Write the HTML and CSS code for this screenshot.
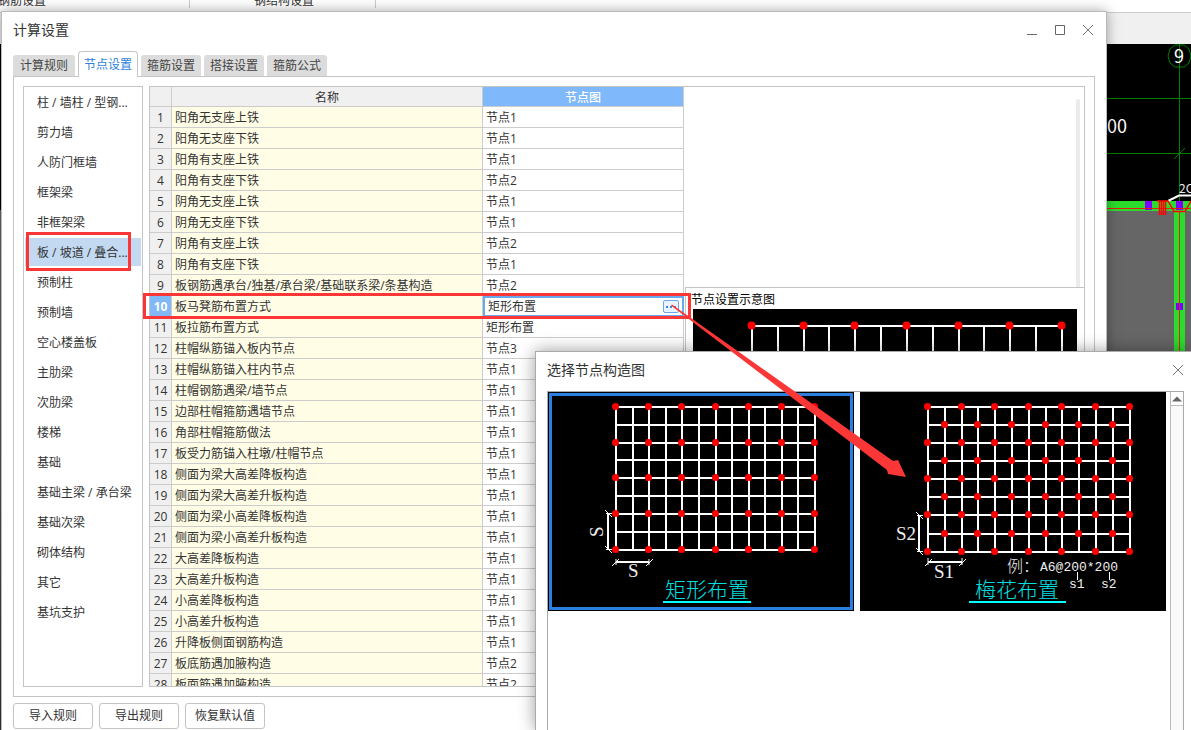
FILE: index.html
```html
<!DOCTYPE html>
<html lang="zh-CN">
<head>
<meta charset="utf-8">
<title>计算设置</title>
<link rel="stylesheet" href="styles.css">
</head>
<body>
<div class="desktop">
  <header class="ribbon">
    <span class="ribbon-group first">钢筋设置</span>
    <span class="ribbon-group second">钢结构设置</span>
  </header>
  <div class="subbar"></div>
  <div class="canvas">
    <div class="canvas-edge"></div>
    <svg class="cad" width="84" height="686" viewBox="1107 44 84 686">
      <rect x="1107" y="44" width="84" height="686" fill="#000"/>
      <rect x="1107" y="211" width="84" height="519" fill="#666"/>
      <path d="M1107 98.500h84M1107 153.500h84M1174 159l11-11" stroke="#008000" fill="none"/>
      <path d="M1107 201h84v10h-6v519h-11v-519h-67z" fill="#2cdc2c"/>
      <path d="M1179.500 44v157" stroke="#008000"/>
      <path d="M1175 45h9l5 4 2 7-2 7-5 4h-9l-5-4-2-7 2-7z" stroke="#008000" fill="none"/>
      <path d="M1145 201h7v9h-7zM1176 201h7v9h-7zM1176 303h7v7h-7z" fill="#8000ff"/>
      <path d="M1107 208.500h84M1179.500 211v519" stroke="#e02010" fill="none"/>
      <path d="M1168 201l11-5.500h12" stroke="#fff" stroke-width="2" fill="none"/>
      <path d="M1157 201h11l6 10.500h11l6-10.500M1159.500 201v14M1161.500 201v14M1163.500 201v14M1165.500 201v14" stroke="#f00" fill="none" stroke-width="1.500"/>
      <text x="1174" y="63" class="cad-text">9</text>
      <text x="1107" y="133" class="cad-text">00</text>
      <text x="1179" y="193" class="cad-small">2C</text>
    </svg>
  </div>

  <section class="dialog">
    <div class="titlebar">
      <h1 class="title">计算设置</h1>
      <div class="window-buttons">
        <button class="icon-button" aria-label="最小化"><svg width="12" height="12"><path d="M1 10.500h10" stroke="#666"/></svg></button>
        <button class="icon-button" aria-label="最大化"><svg width="12" height="12"><path d="M1.500 1.500h9v9h-9z" stroke="#666" fill="none"/></svg></button>
        <button class="icon-button" aria-label="关闭"><svg width="12" height="12"><path d="M1 1l10 10M11 1l-10 10" stroke="#777" fill="none"/></svg></button>
      </div>
    </div>
    <nav class="tabs">
      <button class="tab first">计算规则</button>
      <button class="tab active">节点设置</button>
      <button class="tab">箍筋设置</button>
      <button class="tab">搭接设置</button>
      <button class="tab">箍筋公式</button>
    </nav>
    <div class="tab-page">
      <ul class="categories">
        <li class="category">柱 / 墙柱 / 型钢...</li>
        <li class="category">剪力墙</li>
        <li class="category">人防门框墙</li>
        <li class="category">框架梁</li>
        <li class="category">非框架梁</li>
        <li class="category selected">板 / 坡道 / 叠合...</li>
        <li class="category">预制柱</li>
        <li class="category">预制墙</li>
        <li class="category">空心楼盖板</li>
        <li class="category">主肋梁</li>
        <li class="category">次肋梁</li>
        <li class="category">楼梯</li>
        <li class="category">基础</li>
        <li class="category">基础主梁 / 承台梁</li>
        <li class="category">基础次梁</li>
        <li class="category">砌体结构</li>
        <li class="category">其它</li>
        <li class="category">基坑支护</li>
      </ul>
      <div class="main-panel">
        <table class="nodes">
          <thead>
            <tr><th class="col-num"></th><th class="col-name">名称</th><th class="col-node">节点图</th></tr>
          </thead>
          <tbody>
            <tr><th>1</th><td>阳角无支座上铁</td><td>节点1</td></tr>
            <tr><th>2</th><td>阳角无支座下铁</td><td>节点1</td></tr>
            <tr><th>3</th><td>阳角有支座上铁</td><td>节点1</td></tr>
            <tr><th>4</th><td>阳角有支座下铁</td><td>节点2</td></tr>
            <tr><th>5</th><td>阴角无支座上铁</td><td>节点1</td></tr>
            <tr><th>6</th><td>阴角无支座下铁</td><td>节点1</td></tr>
            <tr><th>7</th><td>阴角有支座上铁</td><td>节点2</td></tr>
            <tr><th>8</th><td>阴角有支座下铁</td><td>节点1</td></tr>
            <tr><th>9</th><td>板钢筋遇承台/独基/承台梁/基础联系梁/条基构造</td><td>节点2</td></tr>
            <tr class="current"><th>10</th><td>板马凳筋布置方式</td><td><div class="editor"><input class="editor-input" aria-label="节点图" value="矩形布置"><button class="more" aria-label="选择"><svg width="10" height="2"><path d="M0 0h2v2h-2zM4 0h2v2h-2zM8 0h2v2h-2z" fill="#3c8ae8"/></svg></button></div></td></tr>
            <tr><th>11</th><td>板拉筋布置方式</td><td>矩形布置</td></tr>
            <tr><th>12</th><td>柱帽纵筋锚入板内节点</td><td>节点3</td></tr>
            <tr><th>13</th><td>柱帽纵筋锚入柱内节点</td><td>节点1</td></tr>
            <tr><th>14</th><td>柱帽钢筋遇梁/墙节点</td><td>节点1</td></tr>
            <tr><th>15</th><td>边部柱帽箍筋遇墙节点</td><td>节点1</td></tr>
            <tr><th>16</th><td>角部柱帽箍筋做法</td><td>节点1</td></tr>
            <tr><th>17</th><td>板受力筋锚入柱墩/柱帽节点</td><td>节点1</td></tr>
            <tr><th>18</th><td>侧面为梁大高差降板构造</td><td>节点1</td></tr>
            <tr><th>19</th><td>侧面为梁大高差升板构造</td><td>节点1</td></tr>
            <tr><th>20</th><td>侧面为梁小高差降板构造</td><td>节点1</td></tr>
            <tr><th>21</th><td>侧面为梁小高差升板构造</td><td>节点1</td></tr>
            <tr><th>22</th><td>大高差降板构造</td><td>节点1</td></tr>
            <tr><th>23</th><td>大高差升板构造</td><td>节点1</td></tr>
            <tr><th>24</th><td>小高差降板构造</td><td>节点1</td></tr>
            <tr><th>25</th><td>小高差升板构造</td><td>节点1</td></tr>
            <tr><th>26</th><td>升降板侧面钢筋构造</td><td>节点1</td></tr>
            <tr><th>27</th><td>板底筋遇加腋构造</td><td>节点2</td></tr>
            <tr><th>28</th><td>板面筋遇加腋构造</td><td>节点2</td></tr>
          </tbody>
        </table>
        <div class="side">
          <div class="side-top"><div class="thumb"></div></div>
          <div class="side-bottom">
            <h2 class="side-title">节点设置示意图</h2>
            <svg class="preview" height="270" viewBox="693 309 384 270" preserveAspectRatio="xMinYMin slice">
              <rect x="693" y="309" width="384" height="270" fill="#000"/>
              <path d="M751 326h312M752 326v253M778 326v253M804 326v253M829 326v253M855 326v253M881 326v253M907 326v253M933 326v253M959 326v253M984 326v253M1010 326v253M1036 326v253M1062 326v253" stroke="#fff" stroke-width="2" fill="none"/>
              <path class="dots large" d="M751.500 325.500h0M803.500 325.500h0M854.500 325.500h0M906.500 325.500h0M958.500 325.500h0M1009.500 325.500h0M1061.500 325.500h0"/>
            </svg>
          </div>
        </div>
      </div>
    </div>
    <footer class="actions">
      <button class="action">导入规则</button>
      <button class="action">导出规则</button>
      <button class="action">恢复默认值</button>
    </footer>
  </section>

  <section class="popup">
    <div class="popup-bar">
      <h2 class="title">选择节点构造图</h2>
      <button class="icon-button" aria-label="关闭"><svg width="12" height="12"><path d="M1 1l10 10M11 1l-10 10" stroke="#777" fill="none"/></svg></button>
    </div>
    <div class="popup-body">
      <div class="choices">
        <button class="choice selected" aria-label="矩形布置">
          <svg width="306" height="219" viewBox="548 392 306 219">
            <rect x="548" y="392" width="306" height="219" fill="#000"/>
            <rect x="550.500" y="394.500" width="301" height="214" fill="none" stroke="#2a7fe0" stroke-width="3"/>
            <path d="M615 407h201M615 425h201M615 443h201M615 460h201M615 478h201M615 496h201M615 514h201M615 532h201M615 550h201M616 407v143M633 407v143M649 407v143M666 407v143M682 407v143M699 407v143M716 407v143M732 407v143M749 407v143M765 407v143M782 407v143M798 407v143M815 407v143" stroke="#fff" stroke-width="2" fill="none"/>
            <path class="dots" d="M615.500 406.500h0m33 0h0m33 0h0m34 0h0m33 0h0m33 0h0m33 0h0M615.500 442.500h0m33 0h0m33 0h0m34 0h0m33 0h0m33 0h0m33 0h0M615.500 477.500h0m33 0h0m33 0h0m34 0h0m33 0h0m33 0h0m33 0h0M615.500 513.500h0m33 0h0m33 0h0m34 0h0m33 0h0m33 0h0m33 0h0M615.500 549.500h0m33 0h0m33 0h0m34 0h0m33 0h0m33 0h0m33 0h0"/>
            <path d="M608 513v37M616 562h33" stroke="#fff" stroke-width="2" fill="none"/>
            <path d="M605 510l7 7M605 546l7 7M606 513.500h6M606 549.500h6M612 566l7-7M646 566l7-7M616 559v6M649 559v6" stroke="#fff" fill="none"/>
            <text class="dim" x="628" y="577">S</text>
            <text class="dim" x="0" y="0" transform="translate(603 537) rotate(-90)">S</text>
            <text class="caption" x="665" y="597">矩形布置</text>
            <path d="M663 602h88" stroke="#0ff" stroke-width="2"/>
          </svg>
        </button>
        <button class="choice" aria-label="梅花布置">
          <svg width="306" height="219" viewBox="860 392 306 219">
            <rect x="860" y="392" width="306" height="219" fill="#000"/>
            <path d="M927 407h204M927 425h204M927 443h204M927 461h204M927 479h204M927 497h204M927 515h204M927 534h204M927 552h204M928 407v145M945 407v145M962 407v145M978 407v145M995 407v145M1012 407v145M1029 407v145M1046 407v145M1062 407v145M1079 407v145M1096 407v145M1113 407v145M1130 407v145" stroke="#fff" stroke-width="2" fill="none"/>
            <path class="dots" d="M927.500 406.500h0m34 0h0m33 0h0m34 0h0m33 0h0m34 0h0m34 0h0M927.500 442.500h0m34 0h0m33 0h0m34 0h0m33 0h0m34 0h0m34 0h0M927.500 478.500h0m34 0h0m33 0h0m34 0h0m33 0h0m34 0h0m34 0h0M927.500 514.500h0m34 0h0m33 0h0m34 0h0m33 0h0m34 0h0m34 0h0M927.500 551.500h0m34 0h0m33 0h0m34 0h0m33 0h0m34 0h0m34 0h0M944.500 424.500h0m33 0h0m34 0h0m34 0h0m33 0h0m34 0h0M944.500 460.500h0m33 0h0m34 0h0m34 0h0m33 0h0m34 0h0M944.500 496.500h0m33 0h0m34 0h0m34 0h0m33 0h0m34 0h0M944.500 533.500h0m33 0h0m34 0h0m34 0h0m33 0h0m34 0h0"/>
            <path d="M919 515v37M928 562h34" stroke="#fff" stroke-width="2" fill="none"/>
            <path d="M916 512l7 7M916 548l7 7M917 515.500h6M917 551.500h6M925 566l7-7M959 566l7-7M928 558v7M962 558v7M1077.500 572v8M1109.500 572v8" stroke="#fff" fill="none"/>
            <text class="dim" x="896" y="540">S2</text>
            <text class="dim" x="934" y="578">S1</text>
            <text class="note" x="1007" y="572">例：</text>
            <text class="note mono" x="1040" y="571">A6@200*200</text>
            <text class="note mono" x="1069" y="588">s1</text>
            <text class="note mono" x="1101" y="588">s2</text>
            <text class="caption" x="975" y="597">梅花布置</text>
            <path d="M969 602h97" stroke="#0ff" stroke-width="2"/>
          </svg>
        </button>
      </div>
      <div class="scrollbar">
        <button class="scroll-up" aria-label="向上滚动"><svg width="10" height="6"><path d="M0 5.500l5-5 5 5z" fill="#666"/></svg></button>
      </div>
    </div>
  </section>

  <svg class="marks" width="1191" height="730" viewBox="0 0 1191 730">
    <path d="M27.500 233.500h102v36h-102zM144.500 294.500h545v23h-545z" fill="none" stroke="#fb3636" stroke-width="3"/>
    <path d="M672 304.500L893 461l5-1 8 17-18-3-1-4-216-164.500z" fill="#fb3636"/>
  </svg>
</div>
</body>
</html>
```
FILE: styles.css
```css
* { box-sizing: border-box; }

body {
  margin: 0;
  font-family: "Open Sans", "Noto Sans CJK SC", sans-serif;
  font-size: 12px;
  line-height: 20px;
  color: #333;
}

button, input { font: inherit; color: inherit; margin: 0; }
h1, h2 { margin: 0; font-weight: 400; }

.desktop {
  position: relative;
  display: flex;
  flex-direction: column;
  height: 100vh;
  overflow: hidden;
  background: #fff;
}

.ribbon {
  display: flex;
  height: 13px;
  border-bottom: 1px solid #ccc;
  overflow: hidden;
}
.ribbon-group {
  height: 8px;
  line-height: 2px;
  border-right: 1px solid #ccc;
}
.ribbon-group.first { width: 190px; text-indent: -2px; }
.ribbon-group.second { width: 186px; padding-left: 64px; }

.subbar { height: 31px; background: #f0f0f0; }

.canvas {
  flex: 1;
  min-height: 0;
  display: flex;
  justify-content: space-between;
  background: #000;
}
.canvas-edge {
  width: 2px;
  background: linear-gradient(#000 166px, #666 166px, #555 440px, #333);
}
.cad { flex: none; }
.cad-text { font-size: 18px; fill: #fff; font-family: "Noto Sans CJK SC", sans-serif; font-weight: 400; }
.cad-small { font-size: 12px; fill: #eee; font-family: "Noto Sans CJK SC", sans-serif; }

.dialog {
  position: absolute;
  left: 1px;
  right: 84px;
  top: 11px;
  bottom: 0;
  display: flex;
  flex-direction: column;
  padding: 0 11px 1px;
  background: #fff;
  border: 1px solid #bbb;
  border-bottom: 0;
  box-shadow: 0 0 12px rgba(0, 0, 0, 0.35);
}

.titlebar {
  display: flex;
  align-items: center;
  justify-content: space-between;
  height: 39px;
  padding: 0 1px 3px 0;
}
.title { font-size: 14px; }
.window-buttons { display: flex; gap: 16px; }
.icon-button {
  display: flex;
  padding: 0;
  border: 0;
  background: none;
}

.tabs {
  display: flex;
  align-items: flex-end;
  gap: 3px;
  height: 25px;
}
.tab {
  width: 60px;
  height: 21px;
  padding: 0;
  border: 0;
  border-radius: 3px 3px 0 0;
  background: #dcdcdc;
  color: #444;
}
.tab.first { width: 62px; }
.tab.active {
  position: relative;
  height: 26px;
  margin-bottom: -1px;
  border: 1px solid #c4c4c8;
  border-bottom: 0;
  border-radius: 4px 4px 0 0;
  background: #fff;
  color: #2a7fe0;
}

.tab-page {
  flex: 1;
  min-height: 0;
  display: flex;
  gap: 6px;
  padding: 9px;
  border: 1px solid #c4c4c4;
}

.categories {
  display: flex;
  flex-direction: column;
  gap: 2px;
  width: 120px;
  margin: 0;
  padding: 1px;
  border: 1px solid #c4c4c8;
  list-style: none;
}
.category {
  height: 28px;
  padding-left: 12px;
  line-height: 29px;
  white-space: nowrap;
}
.category.selected { background: #c2d9f1; }

.main-panel {
  flex: 1;
  min-width: 0;
  display: flex;
  align-items: flex-start;
  border: 1px solid #c4c4c4;
  overflow: hidden;
}

.nodes {
  flex: none;
  width: 534px;
  table-layout: fixed;
  border-collapse: separate;
  border-spacing: 0;
}
.nodes th, .nodes td {
  height: 21px;
  padding: 2px 0 0 3px;
  line-height: 18px;
  border-right: 1px solid #ccc;
  border-bottom: 1px solid #ccc;
  font-weight: 400;
  text-align: left;
  white-space: nowrap;
}
.nodes th { background: #f0f0f0; padding: 2px 0 0; text-align: center; }
.nodes thead th { height: 20px; line-height: 17px; }
.col-num { width: 22px; }
.col-name { width: 311px; }
.nodes .col-node { background: #7fb9fb; color: #fff; font-weight: 500; }
.nodes td:nth-child(2) { background: #fffde6; }
.nodes .current th { background: #80b8f8; color: #fff; font-weight: 700; }
.nodes .current td:last-child { padding: 0; border-right: 0; border-bottom: 0; }

.editor {
  display: flex;
  align-items: center;
  height: 21px;
  padding: 0 3px;
  border: 2px solid #6aa8ec;
}
.editor-input {
  flex: 1;
  min-width: 0;
  height: 17px;
  padding: 0;
  border: 0;
  outline: 0;
  background: none;
}
.more {
  display: flex;
  align-items: center;
  justify-content: center;
  width: 16px;
  height: 13px;
  padding: 0;
  border: 1px solid #6aa8ec;
  border-radius: 2px;
  background: #eaf3fe;
}

.side {
  flex: 1;
  min-width: 0;
  align-self: stretch;
  display: flex;
  flex-direction: column;
  padding-left: 1px;
}
.side-top {
  display: flex;
  justify-content: flex-end;
  height: 200px;
  padding: 12px 4px 0 0;
}
.thumb { width: 4px; border-radius: 2px 2px 0 0; background: #ebebeb; }
.side-bottom {
  flex: 1;
  padding: 3px 7px 0;
  border-top: 1px solid #c4c4c4;
  border-left: 1px solid #c4c4c4;
}
.side-title { margin-left: -2px; font-size: 12px; line-height: 18px; color: #000; }
.preview { display: block; width: 100%; }

.dots { stroke: #f00; stroke-width: 7; stroke-linecap: round; fill: none; }
.dots.large { stroke-width: 8; }
.dim { font-family: "Liberation Serif", serif; font-size: 19px; fill: #eee; }
.caption { font-family: "Noto Sans CJK SC", sans-serif; font-size: 21px; font-weight: 300; fill: #00e0e0; }
.note { font-family: "Noto Sans CJK SC", sans-serif; font-size: 16px; font-weight: 300; fill: #eee; }
.note.mono { font-family: "Liberation Mono", monospace; font-size: 13px; }

.actions { display: flex; gap: 6px; padding-top: 6px; }
.action {
  width: 80px;
  height: 26px;
  padding: 0;
  border: 1px solid #c4c4c8;
  border-radius: 3px;
  background: #fff;
}

.popup {
  position: absolute;
  left: 535px;
  right: -1px;
  top: 351px;
  bottom: 0;
  display: flex;
  flex-direction: column;
  padding: 0 7px 0 11px;
  background: #fff;
  border: 1px solid #aaa;
  border-bottom: 0;
  box-shadow: 0 0 16px rgba(0, 0, 0, 0.4);
}
.popup-bar {
  display: flex;
  align-items: center;
  justify-content: space-between;
  height: 39px;
  padding-bottom: 3px;
}
.popup-body {
  flex: 1;
  display: flex;
  justify-content: space-between;
  border: 1px solid #aaa;
  border-bottom: 0;
}
.choices { display: flex; align-items: flex-start; gap: 6px; }
.choice { display: flex; padding: 0; border: 0; background: #000; }
.scrollbar {
  width: 13px;
  background: #fafafa;
  border-left: 1px solid #bbb;
}
.scroll-up {
  display: flex;
  align-items: center;
  justify-content: center;
  width: 100%;
  height: 14px;
  padding: 0;
  border: 0;
  border-bottom: 1px solid #bbb;
  background: #fff;
}

.marks { position: absolute; left: 0; top: 0; pointer-events: none; }
```
